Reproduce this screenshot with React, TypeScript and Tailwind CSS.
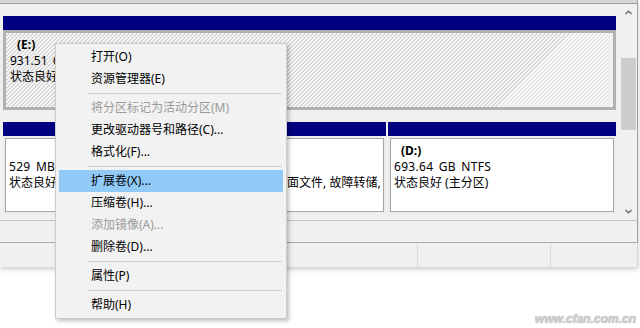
import React from "react";

type Item = { t: string; d?: boolean; h?: boolean } | "sep";

const items: Item[] = [
  { t: "打开(O)" },
  { t: "资源管理器(E)" },
  "sep",
  { t: "将分区标记为活动分区(M)", d: true },
  { t: "更改驱动器号和路径(C)..." },
  { t: "格式化(F)..." },
  "sep",
  { t: "扩展卷(X)...", h: true },
  { t: "压缩卷(H)..." },
  { t: "添加镜像(A)...", d: true },
  { t: "删除卷(D)..." },
  "sep",
  { t: "属性(P)" },
  "sep",
  { t: "帮助(H)" },
];

function Chevron({ up }: { up?: boolean }) {
  return (
    <svg width="7" height="5" viewBox="0 0 7 5">
      <polyline
        points={up ? "0.5,4 3.5,1 6.5,4" : "0.5,1 3.5,4 6.5,1"}
        fill="none"
        stroke="#606060"
        strokeWidth="1.2"
      />
    </svg>
  );
}

function Partition({
  w,
  lines,
}: {
  w: string;
  lines: { label?: string; l2: string; l3: string };
}) {
  return (
    <div className={`${w} flex flex-col`}>
      <div className="h-[14px] bg-[#000080]" />
      <div className="h-[78px] p-[2px] bg-[#ececec]">
        <div className="h-full border border-[#a6a6a6] bg-white pt-[4px] pl-[3px] overflow-hidden whitespace-nowrap text-[12px] leading-[16px] text-black">
          <div className="h-[16px] pl-[7px] font-bold">{lines.label ?? ""}</div>
          <div className="tracking-[0.3px] [word-spacing:2px]">{lines.l2}</div>
          <div>{lines.l3}</div>
        </div>
      </div>
    </div>
  );
}

export default function App() {
  return (
    <div className="relative w-[640px] h-[328px] overflow-hidden bg-white font-['Noto_Sans','Noto_Sans_CJK_SC',sans-serif]">
      <div className="w-[638px] h-[267px] bg-[#f0f0f0] flex flex-col shadow-[0_2px_5px_rgba(0,0,0,0.22)]">
        {/* top strip */}
        <div className="h-[4px] bg-[#d6d6d6] border-b border-r border-[#a0a0a0]" />
        {/* main disk area */}
        <div className="h-[216px] flex border-r border-[#a0a0a0]">
          <div className="w-[620px] pl-[3px] pt-[12px] flex flex-col">
            {/* Row E */}
            <div className="w-[613px] h-[14px] bg-[#000080]" />
            <div className="w-[613px] h-[80px] border-[3px] border-[#b1b1b1] bg-[repeating-linear-gradient(135deg,#f8f8f8_0px,#f8f8f8_1.9px,#d9d9d9_1.9px,#d9d9d9_2.83px)] pt-[4px] pl-[4px] text-[12px] leading-[16px] text-black whitespace-nowrap">
              <div className="pl-[7px] font-bold">(E:)</div>
              <div className="[word-spacing:2px]">931.51 GB NTFS</div>
              <div>状态良好 (主分区)</div>
            </div>
            {/* Row 2 */}
            <div className="mt-[12px] flex gap-[2px] w-[613px]">
              <Partition w="w-[179px]" lines={{ l2: "529 MB", l3: "状态良好 (恢复分区)" }} />
              <Partition
                w="w-[202px]"
                lines={{
                  label: "(C:)",
                  l2: "237.91 GB NTFS",
                  l3: "状态良好 (启动, 页面文件, 故障转储, 主分区)",
                }}
              />
              <Partition
                w="w-[228px]"
                lines={{ label: "(D:)", l2: "693.64 GB NTFS", l3: "状态良好 (主分区)" }}
              />
            </div>
          </div>
          {/* scrollbar */}
          <div className="w-[17px] flex flex-col">
            <div className="h-[17px] flex items-center justify-center">
              <Chevron up />
            </div>
            <div className="mt-[37px] mx-[1px] h-[72px] bg-[#cdcdcd]" />
            <div className="flex-1" />
            <div className="h-[17px] flex items-center justify-center">
              <Chevron />
            </div>
          </div>
        </div>
        {/* legend band */}
        <div className="h-[23px] border-t border-b border-r border-t-[#c4c4c4] border-b-[#a9a9a9] border-r-[#a0a0a0]" />
        {/* status bar */}
        <div className="h-[24px] flex border-r border-[#d8d8d8]">
          <div className="w-[418px] border-r border-[#dcdcdc]" />
          <div className="w-[133px] border-r border-[#dcdcdc]" />
          <div className="flex-1" />
        </div>
      </div>

      {/* context menu */}
      <div className="absolute left-[55px] top-[43px] w-[232px] border border-[#cccccc] bg-[#f2f2f2] px-[3px] py-[2px] shadow-[2px_2px_4px_rgba(0,0,0,0.25)] text-[12px]">
        {items.map((it, i) =>
          it === "sep" ? (
            <div key={i} className="h-[7px] flex items-center pl-[29px] pr-[1px]">
              <div className="h-px w-full bg-[#d2d2d2]" />
            </div>
          ) : (
            <div
              key={i}
              className={`h-[22px] leading-[22px] pl-[32px] whitespace-nowrap ${
                it.h ? "bg-[#91c9f7]" : ""
              } ${it.d ? "text-[#9a9a9a]" : "text-black"}`}
            >
              {it.t}
            </div>
          )
        )}
      </div>

      {/* watermark */}
      <div className="absolute right-[4px] top-[310px] text-[12px] italic font-bold text-[#d2d2d2] [text-shadow:0_0_1px_#8f8f8f] font-['Liberation_Sans',sans-serif]">
        www.cfan.com.cn
      </div>
    </div>
  );
}
